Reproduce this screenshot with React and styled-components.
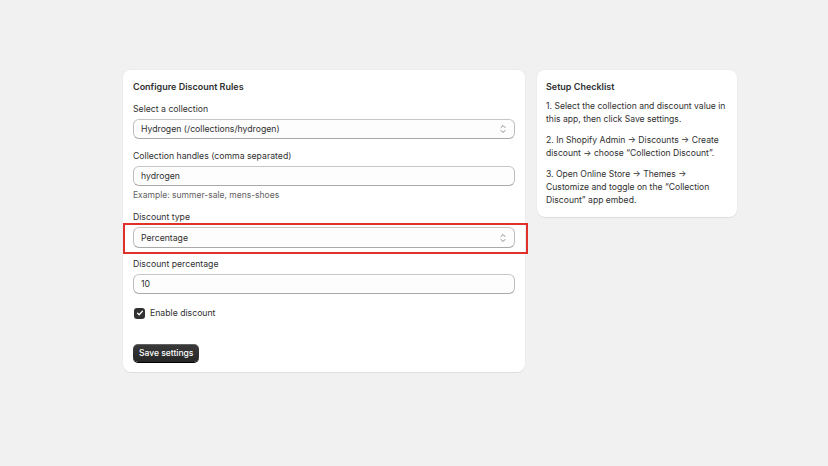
import React from "react";
import styled, { createGlobalStyle } from "styled-components";

const Global = createGlobalStyle`
  html, body { margin: 0; padding: 0; background: #f1f1f1; }
  body { font-family: Inter, "Noto Sans", sans-serif; color: #303030; -webkit-font-smoothing: antialiased; }
  * { box-sizing: border-box; }
`;

const Page = styled.div`
  width: 828px;
  height: 466px;
  padding: 70px 0 0 123px;
`;

const Layout = styled.div`
  display: flex;
  align-items: flex-start;
  gap: 12px;
`;

const Card = styled.section`
  width: ${(p) => p.$w}px;
  background: #fff;
  border-radius: 8px;
  box-shadow: 0 1px 0 0 rgba(26, 26, 26, 0.07), 0 0 0 1px rgba(26, 26, 26, 0.02);
  padding: ${(p) => p.$pad};
  display: flex;
  flex-direction: column;
`;

const Title = styled.h2`
  margin: 0;
  font-size: 9px;
  line-height: 13px;
  font-weight: 600;
  color: #303030;
`;

const Field = styled.div`
  display: flex;
  flex-direction: column;
  margin-top: ${(p) => p.$mt}px;
`;

const Label = styled.label`
  font-size: 8.7px;
  line-height: 12px;
  color: #303030;
  margin-bottom: 4px;
`;

const Control = styled.div`
  position: relative;
  height: ${(p) => p.$h || 20}px;
  border: 1px solid #bdbdbd;
  border-top-color: #c7c7c7;
  border-bottom-color: #a9a9a9;
  border-radius: 6px;
  background: #fdfdfd;
  display: flex;
  align-items: center;
  padding: 0 7px;
  font-size: 8.7px;
  color: #303030;
`;

const Value = styled.span`
  flex: 1;
`;

const Help = styled.div`
  font-size: 8.5px;
  line-height: 12px;
  color: #616161;
  margin-top: 3px;
`;

const Highlight = styled.div`
  position: absolute;
  top: -5px;
  left: -11px;
  right: -14px;
  bottom: -7px;
  border: 2px solid #e0302a;
  pointer-events: none;
`;

const CheckRow = styled.div`
  display: flex;
  align-items: center;
  gap: 5px;
  margin-top: 13px;
  height: 12px;
  font-size: 8.7px;
  color: #303030;
`;

const Box = styled.span`
  width: 11px;
  height: 11px;
  margin-left: 1px;
  border-radius: 3px;
  background: #303030;
  display: inline-flex;
  align-items: center;
  justify-content: center;
`;

const Button = styled.button`
  align-self: flex-start;
  margin-top: 25px;
  height: 18px;
  padding: 0 6px;
  border: none;
  border-radius: 5px;
  background: linear-gradient(#3a3a3a, #262626);
  box-shadow: 0 1px 0 #000, inset 0 1px 0 rgba(255,255,255,0.2);
  color: #fff;
  font-family: inherit;
  font-size: 8.5px;
  font-weight: 500;
`;

const Para = styled.p`
  margin: ${(p) => p.$mt}px 0 0;
  font-size: 8.6px;
  line-height: 13px;
  color: #303030;
`;

const Chevrons = () => (
  <svg width="8" height="10" viewBox="0 0 8 10" fill="none" stroke="#8a8a8a" strokeWidth="1" strokeLinecap="round" strokeLinejoin="round">
    <path d="M2 3.5 4 1.5 6 3.5" />
    <path d="M2 6.5 4 8.5 6 6.5" />
  </svg>
);

const Check = () => (
  <svg width="8" height="8" viewBox="0 0 8 8" fill="none" stroke="#fff" strokeWidth="1.3" strokeLinecap="round" strokeLinejoin="round">
    <path d="M1.6 4.2 3.2 5.8 6.4 2.3" />
  </svg>
);

export default function App() {
  return (
    <>
      <Global />
      <Page>
        <Layout>
          <Card $w={402} $pad="10px 10px 10px 10px">
            <Title>Configure Discount Rules</Title>
            <Field $mt={10}>
              <Label>Select a collection</Label>
              <Control>
                <Value>Hydrogen (/collections/hydrogen)</Value>
                <Chevrons />
              </Control>
            </Field>
            <Field $mt={11}>
              <Label>Collection handles (comma separated)</Label>
              <Control>
                <Value>hydrogen</Value>
              </Control>
              <Help>Example: summer-sale, mens-shoes</Help>
            </Field>
            <Field $mt={10}>
              <Label>Discount type</Label>
              <Control $h={21}>
                <Value>Percentage</Value>
                <Chevrons />
                <Highlight />
              </Control>
            </Field>
            <Field $mt={10}>
              <Label>Discount percentage</Label>
              <Control>
                <Value>10</Value>
              </Control>
            </Field>
            <CheckRow>
              <Box><Check /></Box>
              Enable discount
            </CheckRow>
            <Button>Save settings</Button>
          </Card>
          <Card $w={200} $pad="10px 10px 10px 9px">
            <Title>Setup Checklist</Title>
            <Para $mt={7}>1. Select the collection and discount value in this app, then click Save settings.</Para>
            <Para $mt={8}>2. In Shopify Admin → Discounts → Create discount → choose “Collection Discount”.</Para>
            <Para $mt={8}>3. Open Online Store → Themes → Customize and toggle on the “Collection Discount” app embed.</Para>
          </Card>
        </Layout>
      </Page>
    </>
  );
}
